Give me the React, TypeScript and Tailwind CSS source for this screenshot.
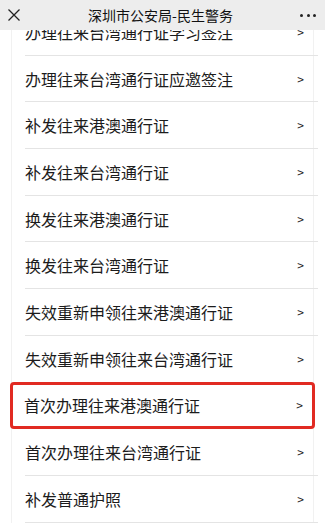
import React from 'react';

const items = [
  '办理往来台湾通行证学习签注',
  '办理往来台湾通行证应邀签注',
  '补发往来港澳通行证',
  '补发往来台湾通行证',
  '换发往来港澳通行证',
  '换发往来台湾通行证',
  '失效重新申领往来港澳通行证',
  '失效重新申领往来台湾通行证',
  '首次办理往来港澳通行证',
  '首次办理往来台湾通行证',
  '补发普通护照',
];

const HIGHLIGHT = 8;

const Header: React.FC = () => (
  <div className="relative z-10 flex h-[30px] items-center bg-[#ededed] px-[7px]">
    <svg width="14" height="14" viewBox="0 0 14 14" className="shrink-0">
      <path d="M1.5 1.5 L12.5 12.5 M12.5 1.5 L1.5 12.5" stroke="#222" strokeWidth="1.3" />
    </svg>
    <div className="flex-1 text-center text-[14px] text-[#111]">深圳市公安局-民生警务</div>
    <div className="flex w-[18px] shrink-0 items-center justify-between pr-[2px]">
      <span className="h-[3px] w-[3px] rounded-full bg-[#222]" />
      <span className="h-[3px] w-[3px] rounded-full bg-[#222]" />
      <span className="h-[3px] w-[3px] rounded-full bg-[#222]" />
    </div>
  </div>
);

export default function App() {
  return (
    <div
      className="h-[530px] w-[325px] overflow-hidden bg-white"
      style={{ fontFamily: '"Noto Sans CJK SC", "Noto Sans", sans-serif' }}
    >
      <Header />
      <div className="ml-[11px] mr-[11px] -mt-[21px] border-x border-[#f1f1f1]">
        {items.map((label, i) => (
          <div
            key={label}
            className={
              i === HIGHLIGHT
                ? 'relative -mx-[2px] -mt-[1px] flex h-[47.7px] items-center rounded-[4px] border-[3px] border-[#e12a22] pl-[11px] pr-[9px]'
                : 'pl-[13px]'
            }
          >
            {i === HIGHLIGHT ? (
              <>
                <span className="flex-1 text-[16px] text-[#1c1c1c]">{label}</span>
                <span className="text-[12px] text-[#222]">&gt;</span>
              </>
            ) : (
              <div
                className={
                  'flex h-[46.7px] items-center -mr-[5px] pr-[14px] ' +
                  (i === HIGHLIGHT - 1 ? '' : 'border-b border-[#e4e4e4]')
                }
              >
                <span className="flex-1 text-[16px] text-[#1c1c1c]">{label}</span>
                <span className="text-[12px] text-[#222]">&gt;</span>
              </div>
            )}
          </div>
        ))}
      </div>
    </div>
  );
}
